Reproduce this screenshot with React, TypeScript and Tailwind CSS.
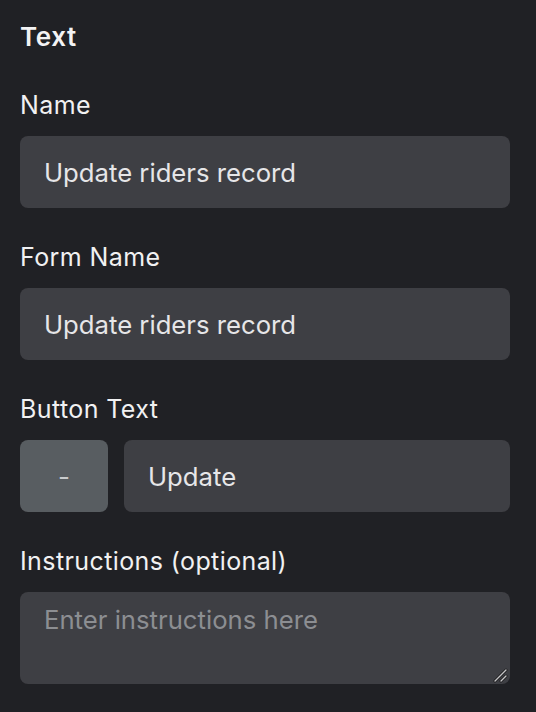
import { useState } from "react";

function Field({ label, children }: { label: string; children: React.ReactNode }) {
  return (
    <div className="flex flex-col">
      <label className="text-[25px] leading-[32px] tracking-[0.4px] text-[#f1f1f2] mb-[15px]">{label}</label>
      {children}
    </div>
  );
}

export default function App() {
  const [name, setName] = useState("Update riders record");
  const [formName, setFormName] = useState("Update riders record");
  const [buttonText, setButtonText] = useState("Update");

  const inputCls =
    "h-[72px] w-full rounded-lg bg-[#3e3f44] px-6 text-[25.7px] text-[#e6e6e8] outline-none";

  return (
    <div className="min-h-screen bg-[#202125] pl-5 pr-[26px] pt-[21px] font-['Inter',sans-serif]">
      <h2 className="text-[26px] leading-[32px] tracking-[0.6px] font-semibold text-[#f3f3f4]">Text</h2>

      <div className="mt-9 flex flex-col gap-[33px]">
        <Field label="Name">
          <input className={inputCls} value={name} onChange={(e) => setName(e.target.value)} />
        </Field>

        <Field label="Form Name">
          <input className={inputCls} value={formName} onChange={(e) => setFormName(e.target.value)} />
        </Field>

        <Field label="Button Text">
          <div className="flex gap-4">
            <button className="h-[72px] w-[88px] shrink-0 rounded-lg bg-[#585d61] text-[26px] text-[#c9cbcd]">
              -
            </button>
            <input
              className={inputCls}
              value={buttonText}
              onChange={(e) => setButtonText(e.target.value)}
            />
          </div>
        </Field>

        <Field label="Instructions (optional)">
          <div className="relative">
            <textarea
              className="block h-[92px] w-full resize-none rounded-lg bg-[#3e3f44] px-6 pt-3 text-[25.7px] leading-[32px] text-[#e6e6e8] placeholder:text-[#8c8e92] outline-none"
              placeholder="Enter instructions here"
            />
            {/* resize grip */}
            <svg className="pointer-events-none absolute bottom-[1px] right-[2px]" width="16" height="16" viewBox="0 0 16 16">
              <path d="M3 14 L14 3 M9 14 L14 9" stroke="#1a1a1c" strokeWidth="3" strokeLinecap="round" />
              <path d="M3 14 L14 3 M9 14 L14 9" stroke="#c4c4c6" strokeWidth="1.4" strokeLinecap="round" />
            </svg>
          </div>
        </Field>
      </div>
    </div>
  );
}
